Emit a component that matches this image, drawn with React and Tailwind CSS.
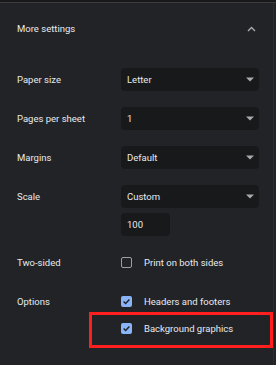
const font = { fontFamily: 'Roboto, "Liberation Sans", sans-serif' };

function Arrow() {
  return (
    <svg width="8" height="5" viewBox="0 0 8 5" className="shrink-0">
      <path d="M0 0.5 H8 L4 4.5 Z" fill="#a8abb0" />
    </svg>
  );
}

function Select({ value }) {
  return (
    <div className="w-[138px] h-[23px] rounded-[4px] bg-[#18191b] flex items-center justify-between pl-[6px] pr-[5px]">
      <span className="text-[#e8eaed]">{value}</span>
      <Arrow />
    </div>
  );
}

function Checkbox({ checked }) {
  if (!checked) {
    return <div className="w-[11px] h-[11px] rounded-[2px] border-[1.5px] border-[#9aa0a6] shrink-0" />;
  }
  return (
    <div className="w-[11px] h-[11px] rounded-[2px] bg-[#8ab4f8] flex items-center justify-center shrink-0">
      <svg width="9" height="9" viewBox="0 0 9 9">
        <path d="M1.6 4.6 L3.6 6.5 L7.4 2.4" stroke="#202124" strokeWidth="1.4" fill="none" />
      </svg>
    </div>
  );
}

function Row({ label, children, className = '' }) {
  return (
    <div className={`flex items-center ${className}`}>
      <div className="w-[104px] text-[#e8eaed]">{label}</div>
      {children}
    </div>
  );
}

export default function App() {
  return (
    <div className="relative w-[276px] h-[365px] bg-[#222326] overflow-hidden text-[9.5px] leading-none" style={font}>
      <div className="h-[2px] bg-[#19191b]" />
      <div className="h-px bg-[#3a3b3f]" />
      <div className="flex">
        <div className="flex-1 pl-[17px]">
          <div className="h-[52px] flex items-center justify-between pr-[17px]">
            <span className="text-[#e8eaed]">More settings</span>
            <svg width="9" height="6" viewBox="0 0 9 6">
              <path d="M1 5 L4.5 1.5 L8 5" stroke="#a8abb0" strokeWidth="1.4" fill="none" />
            </svg>
          </div>

          <div className="flex flex-col gap-[16px] mt-[13px]">
            <Row label="Paper size"><Select value="Letter" /></Row>
            <Row label="Pages per sheet"><Select value="1" /></Row>
            <Row label="Margins"><Select value="Default" /></Row>
          </div>

          <Row label="Scale" className="mt-[16px]"><Select value="Custom" /></Row>
          <div className="ml-[104px] mt-[5px] w-[49px] h-[23px] rounded-[4px] bg-[#18191b] flex items-center pl-[6px] text-[#e8eaed]">
            100
          </div>

          <Row label="Two-sided" className="mt-[21px]">
            <div className="flex items-center gap-[12px]">
              <Checkbox />
              <span className="text-[#e8eaed]">Print on both sides</span>
            </div>
          </Row>

          <Row label="Options" className="mt-[28px]">
            <div className="flex items-center gap-[12px]">
              <Checkbox checked />
              <span className="text-[#e8eaed]">Headers and footers</span>
            </div>
          </Row>
          <div className="ml-[104px] mt-[16px] flex items-center gap-[12px]">
            <Checkbox checked />
            <span className="text-[#e8eaed]">Background graphics</span>
          </div>
        </div>
        <div className="w-px bg-[#2c2d31] self-stretch h-[362px] mr-[2px]" />
      </div>

      <div className="absolute left-[89px] top-[312px] w-[184px] h-[36px] border-[3px] border-[#ff1f1f]" />
    </div>
  );
}
